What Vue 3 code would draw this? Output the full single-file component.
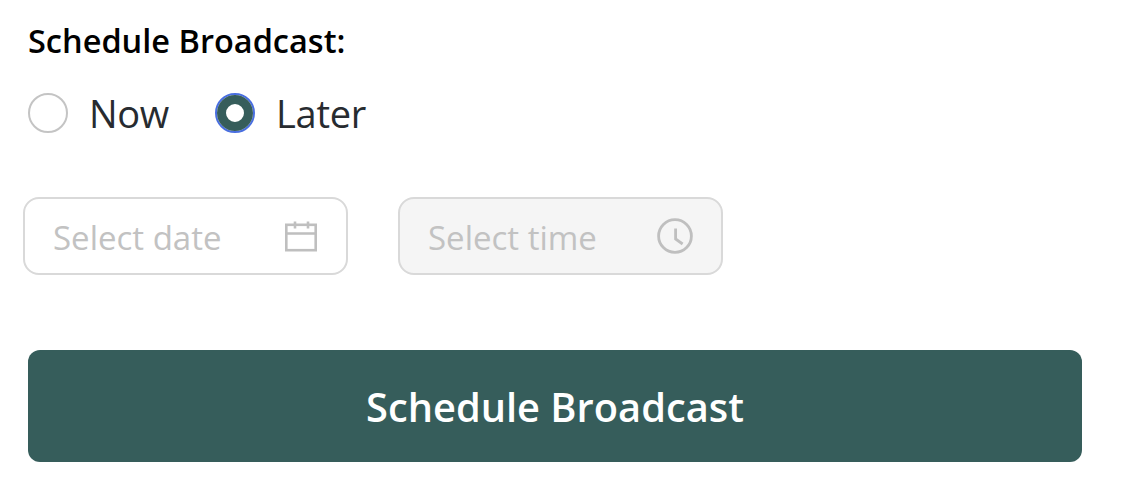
<template>
  <div class="panel">
    <div class="title">Schedule Broadcast:</div>
    <div class="radios">
      <label v-for="o in options" :key="o" class="radio-item" @click="mode = o">
        <span class="radio" :class="{ on: mode === o }"></span>
        <span class="radio-text">{{ o }}</span>
      </label>
    </div>
    <div class="pickers">
      <div class="picker">
        <span class="placeholder">Select date</span>
        <svg class="icon" width="34" height="34" viewBox="0 0 34 34" fill="none" stroke="#bfbfbf" stroke-width="2.6">
          <rect x="2.3" y="5.8" width="29.4" height="25.4" />
          <path d="M2.3 14.5h29.4M11 2.5v7M24 2.5v7" />
        </svg>
      </div>
      <div class="picker disabled">
        <span class="placeholder">Select time</span>
        <svg class="icon" width="36" height="36" viewBox="0 0 36 36" fill="none" stroke="#bfbfbf" stroke-width="2.8">
          <circle cx="18" cy="18" r="16.4" />
          <path d="M18.6 10.5v10.5l7 5" />
        </svg>
      </div>
    </div>
    <button class="submit">Schedule Broadcast</button>
  </div>
</template>

<script setup>
import { ref } from 'vue'
const options = ['Now', 'Later']
const mode = ref('Later')
</script>

<style>
html, body { margin: 0; background: #fff; }
</style>

<style scoped>
.panel { width: 1130px; height: 490px; box-sizing: border-box; padding: 20px 48px 0 28px; font-family: "Open Sans", "Noto Sans", sans-serif; display: flex; flex-direction: column; }
.title { font-size: 32.5px; font-weight: 600; line-height: 42px; color: #000; }
.radios { display: flex; gap: 46px; margin-top: 31px; height: 40px; align-items: center; }
.radio-item { display: flex; align-items: center; gap: 21px; }
.radio { width: 40px; height: 40px; box-sizing: border-box; border-radius: 50%; border: 2px solid #c4c4c4; background: #fff; display: block; }
.radio.on { background: #fff; border: 2px solid #4a6fe0; position: relative; }
.radio.on::after { content: ""; position: absolute; inset: 0; border-radius: 50%; border: 9px solid #365d5b; }
.radio-text { font-size: 38px; line-height: 40px; color: #272b30; letter-spacing: -0.3px; }
.pickers { display: flex; gap: 50px; margin: 64px 0 0 -5px; }
.picker { width: 325px; height: 78px; box-sizing: border-box; border: 2px solid #d9d9d9; border-radius: 16px; padding: 0 28px; display: flex; align-items: center; justify-content: space-between; background: #fff; }
.picker.disabled { background: #f5f5f5; }
.placeholder { font-size: 33px; color: #c2c2c2; padding-top: 2px; }
.submit { margin-top: 75px; height: 112px; width: 1054px; border: none; border-radius: 12px; background: #365d5b; color: #fff; font-family: inherit; font-size: 39.8px; font-weight: 600; }
</style>
